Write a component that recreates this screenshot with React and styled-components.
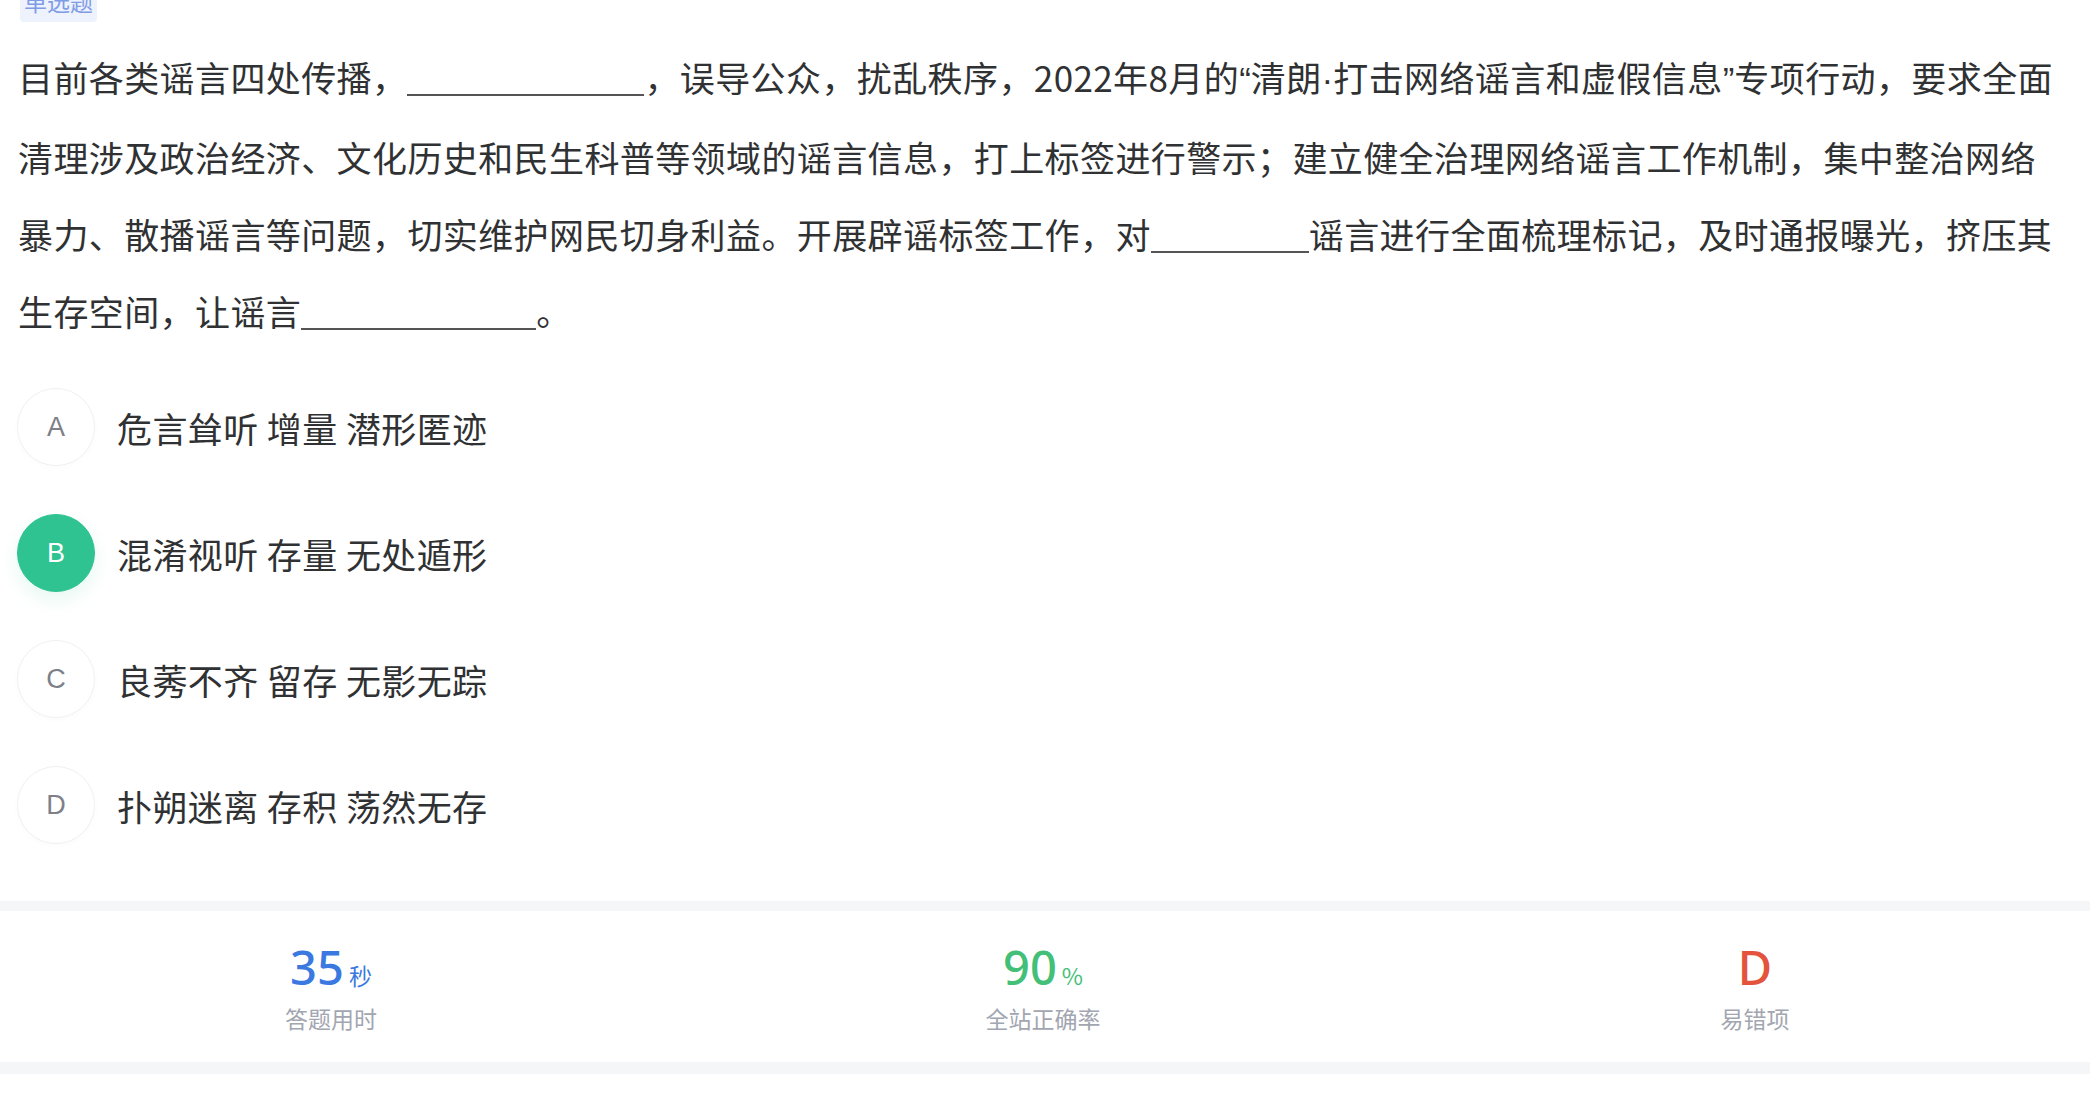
import styled, { createGlobalStyle } from "styled-components";

const GlobalStyle = createGlobalStyle`
  html, body {
    margin: 0;
    padding: 0;
    background: #ffffff;
  }
  body {
    font-family: "Noto Sans", "Noto Sans CJK SC", sans-serif;
    overflow: hidden;
  }
`;

const Page = styled.main`
  width: 2090px;
  height: 1100px;
  overflow: hidden;
  background: #ffffff;
`;

const TypeTag = styled.div`
  margin: -14px 0 0 20px;
  width: 77px;
  height: 36px;
  border-radius: 0 0 4px 4px;
  background: #eef2fd;
  color: #7f9de6;
  font-family: "Noto Sans CJK SC", sans-serif;
  font-size: 23px;
  line-height: 30px;
  text-align: center;
`;

const Question = styled.p`
  margin: 16px 0 0;
  padding: 0 18px;
  font-family: "Noto Sans CJK SC", sans-serif;
  font-size: 35px;
  letter-spacing: 0.4px;
  line-height: 77px;
  color: #303133;
  white-space: nowrap;
`;

/* proportional quotes and middle dot, as in the reference */
const Latin = styled.span`
  font-family: "Liberation Sans", Arial, sans-serif;
  letter-spacing: 0;
`;

const Blank = styled.span`
  display: inline-block;
  width: ${(p) => p.$w}px;
  height: 0.92em;
  vertical-align: -0.12em;
  border-bottom: 2px solid #555555;
`;

const OptionList = styled.ul`
  list-style: none;
  margin: 15px 0 0;
  padding: 0 0 0 17px;
`;

const OptionRow = styled.li`
  display: flex;
  align-items: center;
  gap: 22px;
  height: 126px;
`;

const Bubble = styled.span`
  display: flex;
  align-items: center;
  justify-content: center;
  width: 78px;
  height: 78px;
  box-sizing: border-box;
  border-radius: 50%;
  border: 1px solid ${(p) => (p.$active ? "#2fc392" : "#f0f1f3")};
  background: ${(p) => (p.$active ? "#2fc392" : "#ffffff")};
  box-shadow: ${(p) =>
    p.$active ? "0 8px 18px rgba(47, 195, 146, 0.12)" : "0 2px 6px rgba(0, 0, 0, 0.02)"};
  color: ${(p) => (p.$active ? "#ffffff" : "#7d8089")};
  font-family: "Liberation Sans", Arial, sans-serif;
  font-size: 27px;
`;

const OptionText = styled.span`
  font-family: "Noto Sans CJK SC", sans-serif;
  font-size: 35px;
  letter-spacing: 0.4px;
  color: #303133;
  white-space: pre;
`;

const StatsBar = styled.section`
  margin-top: 33px;
  height: 151px;
  border-top: 10px solid #f5f6f8;
  border-bottom: 12px solid #f5f6f8;
  display: grid;
  grid-template-columns: repeat(3, 200px);
  column-gap: 512px;
  padding-left: 231px;
`;

const Stat = styled.div`
  display: flex;
  flex-direction: column;
  align-items: center;
  padding-top: 31px;
`;

const StatValue = styled.div`
  display: flex;
  align-items: baseline;
  gap: 5px;
  height: 50px;
  color: ${(p) => p.$color};
  font-family: "Noto Sans", sans-serif;
  font-weight: 500;
  font-size: 47px;
  line-height: 50px;
`;

const Unit = styled.span`
  font-family: "Noto Sans CJK SC", sans-serif;
  font-weight: 400;
  font-size: 23px;
  line-height: 1;
`;

const StatLabel = styled.div`
  margin-top: 11px;
  font-family: "Noto Sans CJK SC", sans-serif;
  font-size: 23px;
  line-height: 30px;
  color: #a2a6b0;
`;

const options = [
  { key: "A", text: "危言耸听 增量 潜形匿迹" },
  { key: "B", text: "混淆视听 存量 无处遁形", active: true },
  { key: "C", text: "良莠不齐 留存 无影无踪" },
  { key: "D", text: "扑朔迷离 存积 荡然无存" },
];

const stats = [
  { value: "35", unit: "秒", label: "答题用时", color: "#3b79e1" },
  { value: "90", unit: "%", label: "全站正确率", color: "#43bf78" },
  { value: "D", unit: "", label: "易错项", color: "#e4533c" },
];

export default function App() {
  return (
    <Page>
      <GlobalStyle />
      <TypeTag>单选题</TypeTag>
      <Question>
        目前各类谣言四处传播，<Blank $w={237} />，误导公众，扰乱秩序，2022年8月的<Latin>“</Latin>清朗<Latin>·</Latin>打击网络谣言和虚假信息<Latin>”</Latin>专项行动，要求全面
        <br />
        清理涉及政治经济、文化历史和民生科普等领域的谣言信息，打上标签进行警示；建立健全治理网络谣言工作机制，集中整治网络
        <br />
        暴力、散播谣言等问题，切实维护网民切身利益。开展辟谣标签工作，对<Blank $w={158} />谣言进行全面梳理标记，及时通报曝光，挤压其
        <br />
        生存空间，让谣言<Blank $w={235} />。
      </Question>
      <OptionList>
        {options.map((o) => (
          <OptionRow key={o.key}>
            <Bubble $active={o.active}>{o.key}</Bubble>
            <OptionText>{o.text}</OptionText>
          </OptionRow>
        ))}
      </OptionList>
      <StatsBar>
        {stats.map((s) => (
          <Stat key={s.label}>
            <StatValue $color={s.color}>
              {s.value}
              {s.unit && <Unit>{s.unit}</Unit>}
            </StatValue>
            <StatLabel>{s.label}</StatLabel>
          </Stat>
        ))}
      </StatsBar>
    </Page>
  );
}
